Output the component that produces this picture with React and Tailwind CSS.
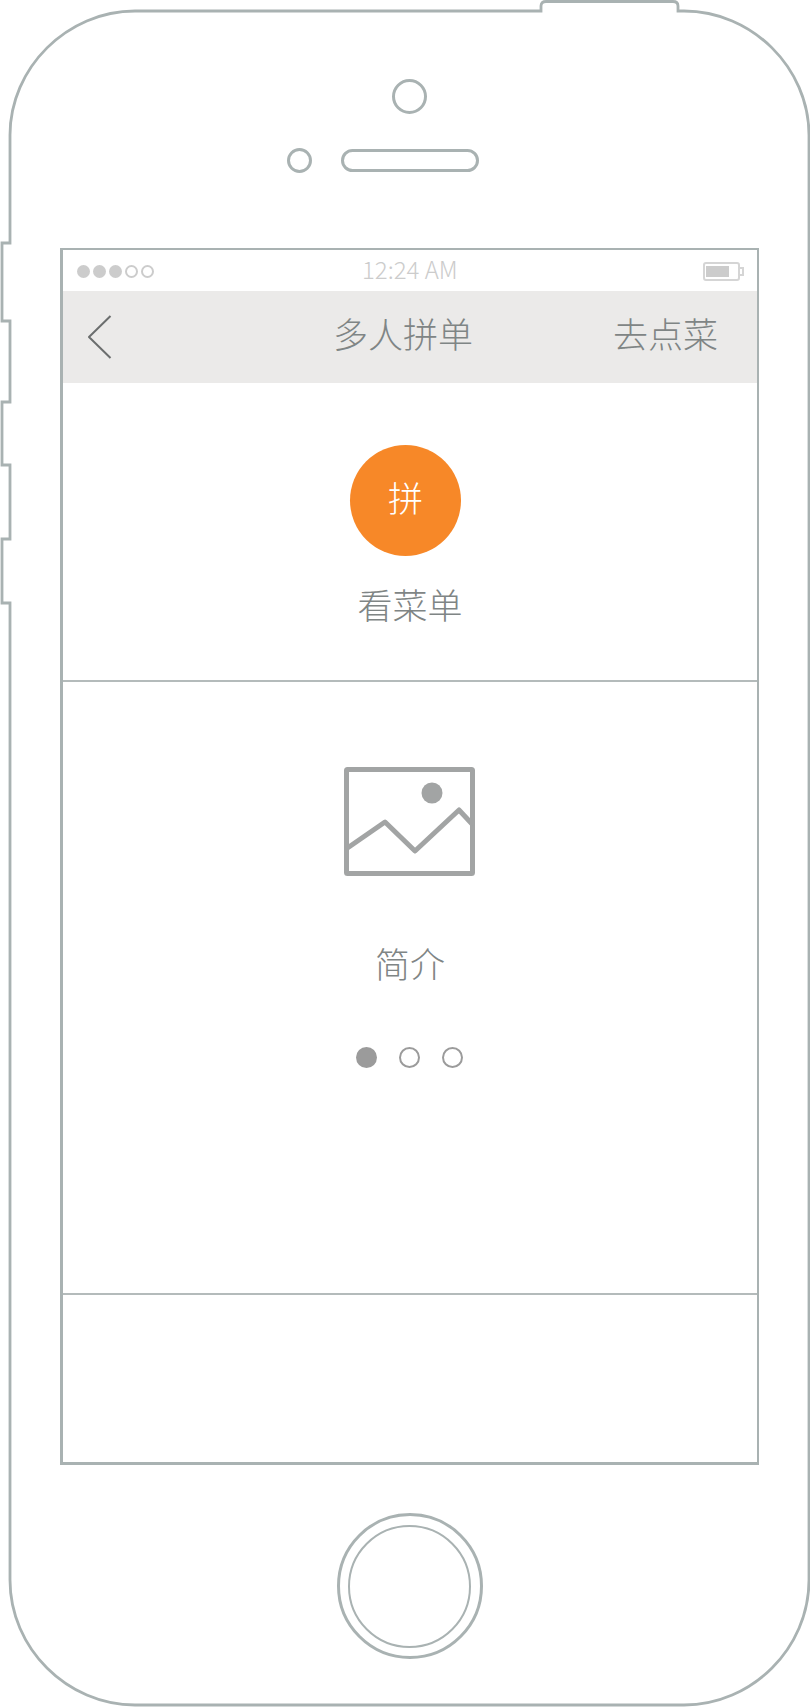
import React from 'react';

const FONT = 'font-["Noto_Sans_CJK_SC","Noto_Sans",sans-serif]';

// device outline with the stepped side buttons and the top power button
function PhoneOutline() {
  return (
    <svg className="absolute inset-0" width="810" height="1708" viewBox="0 0 810 1708" fill="none">
      <path
        d="M135 11 H541 V6 Q541 1.500 546 1.500 H673 Q678 1.500 678 6 V11 H684 C752 11 809 68 809 135 V1580 C809 1648 752 1705 684 1705 H135 C67 1705 10 1648 10 1580 V603 H2 V539 H10 V465 H2 V402 H10 V321 H2 V243 H10 V135 C10 68 67 11 135 11 Z"
        stroke="#a9b2b2"
        strokeWidth="2.800"
      />
    </svg>
  );
}

function StatusBar() {
  return (
    <div className="flex h-[41px] items-center pl-[14px] pr-[13px]">
      <div className="mt-[2px] flex w-[285px] items-center gap-[3px]">
        <span className="h-[13px] w-[13px] rounded-full bg-[#cccccc]" />
        <span className="h-[13px] w-[13px] rounded-full bg-[#cccccc]" />
        <span className="h-[13px] w-[13px] rounded-full bg-[#cccccc]" />
        <span className="h-[13px] w-[13px] rounded-full border-2 border-[#cccccc]" />
        <span className="h-[13px] w-[13px] rounded-full border-2 border-[#cccccc]" />
      </div>
      <span className="mb-[3px] text-[24px] leading-none font-light text-[#cccccc]">12:24 AM</span>
      <div className="ml-auto mt-[2px] flex items-center">
        <div className="flex h-[19px] w-[37px] items-center rounded-[3px] border-2 border-[#d5d5d5] pl-[1px]">
          <div className="h-[11px] w-[23px] bg-[#cccccc]" />
        </div>
        <div className="h-[9px] w-[4px] border-2 border-l-0 border-[#d5d5d5]" />
      </div>
    </div>
  );
}

function NavBar() {
  return (
    <div className="flex h-[92px] items-center bg-[#ebeae9] pl-[25px] pr-[39px]">
      <svg width="24" height="44" viewBox="0 0 24 44" fill="none" className="shrink-0">
        <path d="M22.500 1 L1 22 L22.500 43" stroke="#6b6e6e" strokeWidth="2" strokeLinejoin="round" />
      </svg>
      <span className="mb-[9px] ml-[221px] text-[35px] leading-none font-light text-[#7f8585]">多人拼单</span>
      <span className="mb-[9px] ml-auto text-[35px] leading-none font-light text-[#7f8585]">去点菜</span>
    </div>
  );
}

function Section1() {
  return (
    <div className="flex h-[299px] flex-col items-center border-b-2 border-[#b4bbbb] pt-[62px]">
      <div className="mr-[9px] flex h-[111px] w-[111px] items-center justify-center rounded-full bg-[#f78828] pb-[8px] text-[35px] leading-none font-light text-white">
        拼
      </div>
      <span className="mt-[30px] text-[35px] leading-none font-light text-[#7f8585]">看菜单</span>
    </div>
  );
}

function ImageIcon() {
  return (
    <svg width="132" height="110" viewBox="0 0 132 110" fill="none">
      <rect x="2.500" y="2.500" width="126" height="104" rx="1" stroke="#a2a4a4" strokeWidth="5" />
      <circle cx="88" cy="26" r="10.500" fill="#a2a4a4" />
      <path d="M2 82 L41 55 L71 84 L115 43 L129 58" stroke="#a2a4a4" strokeWidth="5" strokeLinejoin="round" />
    </svg>
  );
}

function Section2() {
  return (
    <div className="flex h-[613px] flex-col items-center border-b-2 border-[#b4bbbb] pt-[85px]">
      <div className="mr-[1px]">
        <ImageIcon />
      </div>
      <span className="mt-[68px] text-[35px] leading-none font-light text-[#7f8585]">简介</span>
      <div className="mr-[2px] mt-[67px] flex items-center gap-[22px]">
        <span className="h-[21px] w-[21px] rounded-full bg-[#9b9b9b]" />
        <span className="h-[21px] w-[21px] rounded-full border-2 border-[#9b9b9b]" />
        <span className="h-[21px] w-[21px] rounded-full border-2 border-[#9b9b9b]" />
      </div>
    </div>
  );
}

export default function App() {
  return (
    <div className={`relative h-[1708px] w-[810px] overflow-hidden bg-white ${FONT}`}>
      <PhoneOutline />
      <div className="relative flex flex-col items-center pl-[9px] pt-[79px]">
        <div className="h-[35px] w-[35px] rounded-full border-3 border-[#a9b2b2]" />
        <div className="mr-[53px] mt-[34px] flex items-center gap-[29px]">
          <div className="h-[25px] w-[25px] rounded-full border-3 border-[#a9b2b2]" />
          <div className="h-[23px] w-[138px] rounded-full border-3 border-[#a9b2b2]" />
        </div>
        <div className="mt-[75px] h-[1217px] w-[699px] border-2 border-b-3 border-l-3 border-[#a9b2b2]">
          <StatusBar />
          <NavBar />
          <Section1 />
          <Section2 />
        </div>
        <div className="mt-[48px] flex h-[146px] w-[146px] items-center justify-center rounded-full border-3 border-[#a9b2b2]">
          <div className="h-[123px] w-[123px] rounded-full border-2 border-[#a9b2b2]" />
        </div>
      </div>
    </div>
  );
}
